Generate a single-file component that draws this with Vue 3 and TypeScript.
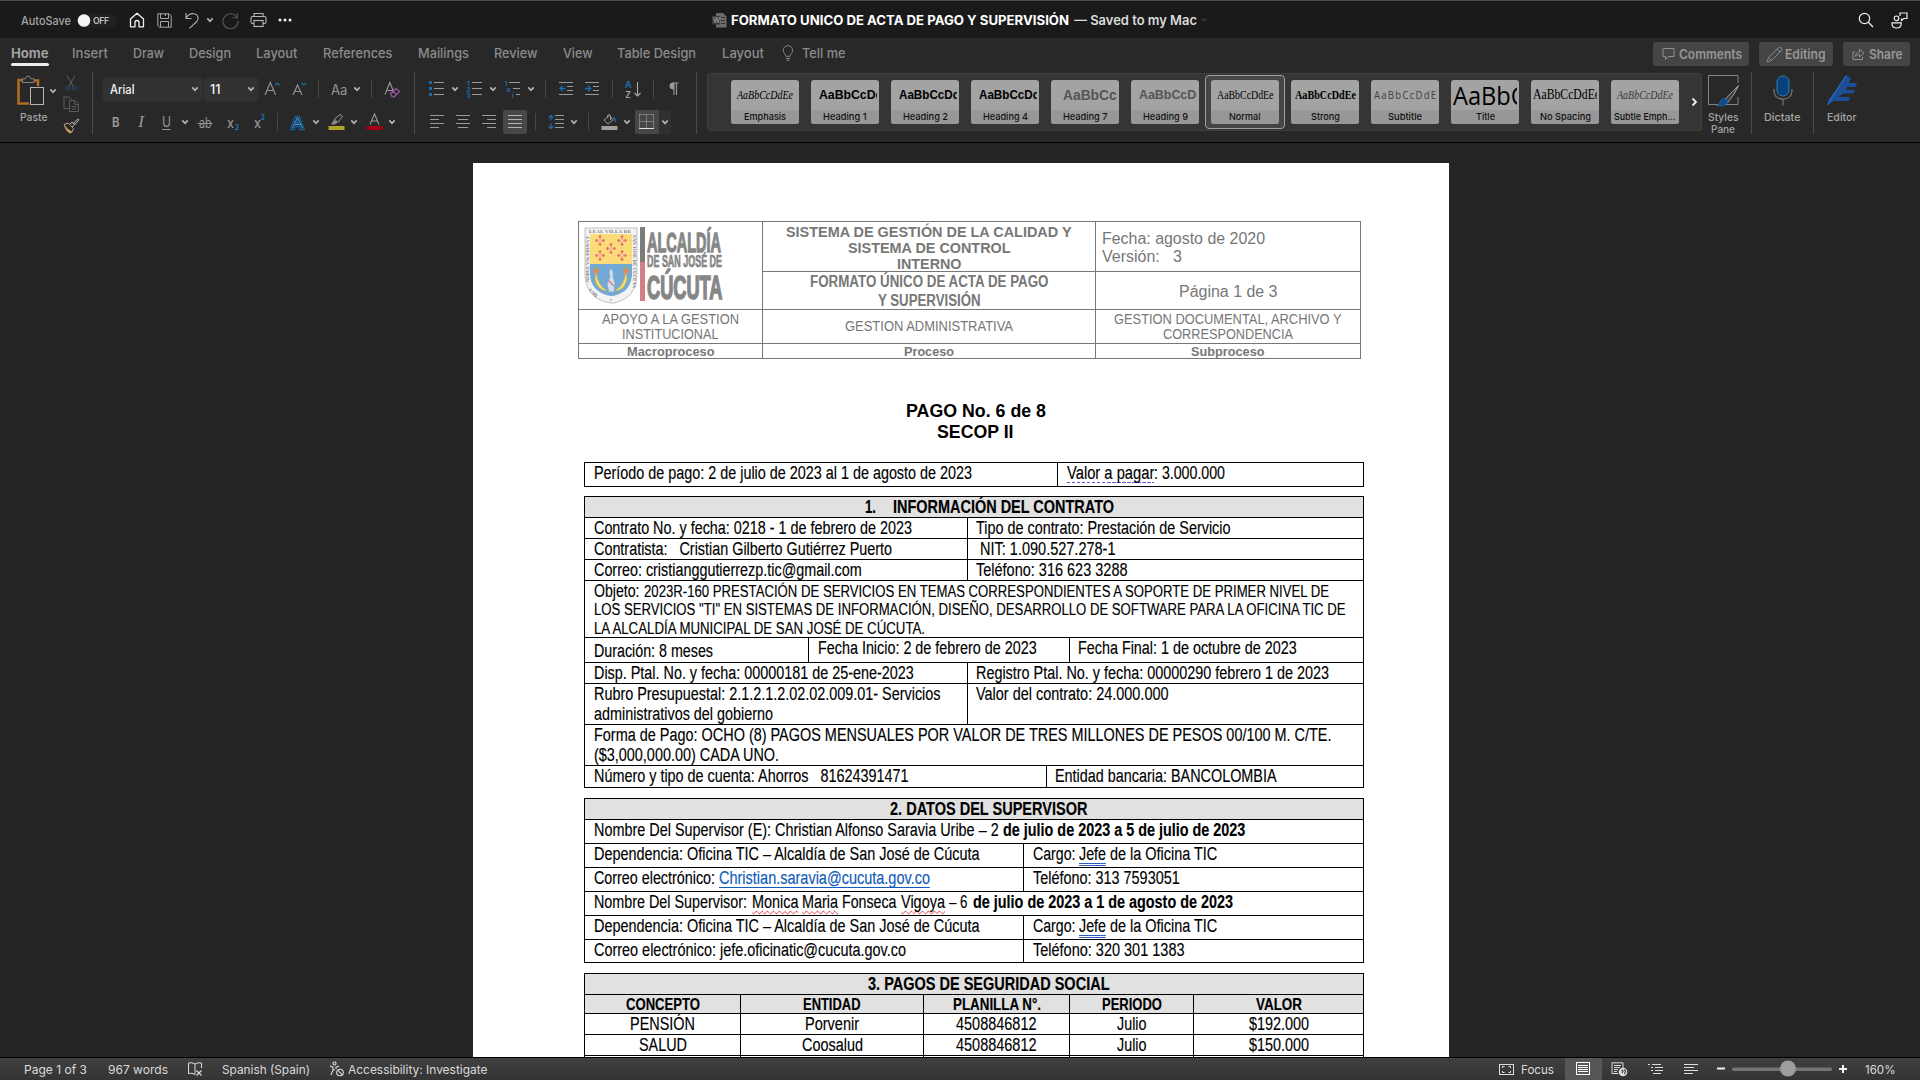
<script setup lang="ts">
import { h, withDirectives, type Directive, type FunctionalComponent } from 'vue'

/** Condenses or expands a run of text horizontally to the given advance width. */
const vFit: Directive<HTMLElement, number> = {
  mounted(el, binding) {
    const natural = el.offsetWidth
    if (!natural || !binding.value) return
    const exact = el.getBoundingClientRect().width
    el.style.transform = `scaleX(${binding.value / exact})`
    el.style.marginRight = `${binding.value - exact}px`
  },
}

interface Icon { w: number; h: number; body: string }
const g = '#9a9a9a'
const bl = '#1f6aa8'
const lines = (rows: number[][], c = g, sw = 1) =>
  rows.map(([x1, y, x2]) => `<path d="M${x1} ${y}H${x2}" stroke="${c}" stroke-width="${sw}"/>`).join('')
const txt = (x: number, y: number, s: number, t: string, c: string, extra = '') =>
  `<text x="${x}" y="${y}" font-size="${s}" fill="${c}" font-family="Inter, sans-serif" ${extra}>${t}</text>`

const ICONS: Record<string, Icon> = {
  chev: { w: 8, h: 6, body: '<path d="M1.3 1.4L4 4.3 6.7 1.4" fill="none" stroke="#b4b4b4" stroke-width="1.7"/>' },
  home: { w: 16, h: 16, body: '<path d="M1.5 7L8 1.2 14.500 7V14.800H10V9.500Q8 7.500 6 9.500V14.800H1.500Z" fill="none" stroke="#f2f2f2" stroke-width="1.3" stroke-linejoin="round"/>' },
  save: { w: 15, h: 15, body: '<g fill="none" stroke="#a9a9a9"><path d="M.8.800H12.200L14.200 2.800V14.200H2.500L.8 12.500Z"/><path d="M3.500.800V5.500H11.500V.800M3.500 14V8.500H11.500V14M8.500 1V3"/></g>' },
  undo: { w: 16, h: 17, body: '<path d="M2 1V6.500H7.500M2 6.200C4 2.500 7 1.300 10 1.700 14 2.300 15.500 6.500 12.800 9.500L5.500 16.300" fill="none" stroke="#b0b0b0" stroke-width="1.1"/>' },
  redo: { w: 17, h: 17, body: '<path d="M15.300 1V5.800H10.500M15 5.500A7.500 7.500 0 1 0 16 9" fill="none" stroke="#5a5a5a" stroke-width="1.100"/>' },
  print: { w: 17, h: 16, body: '<g fill="none" stroke="#b4b4b4" stroke-width="1.1"><path d="M4 4.500V1.500H13V4.500M4 11.500H2.500Q1 11.500 1 10V6Q1 4.500 2.500 4.500H14.500Q16 4.500 16 6V10Q16 11.500 14.500 11.500H13"/><rect x="4" y="8.500" width="9" height="6"/></g>' },
  dots: { w: 14, h: 4, body: '<g fill="#f0f0f0"><circle cx="2" cy="2" r="1.500"/><circle cx="7" cy="2" r="1.500"/><circle cx="12" cy="2" r="1.500"/></g>' },
  word: { w: 15, h: 15, body: '<path d="M4 0H11L14.500 3.500V14.500H4Z" fill="#6b6b6b"/><path d="M9 4.500H13M9 7.500H13M9 10.500H13" stroke="#333"/><rect x="0" y="3" width="8" height="8.500" fill="#3d3d3d"/>' + txt(1, 10, 7, 'W', '#999', 'font-weight="600"') },
  faint: { w: 8, h: 6, body: '<path d="M1.500 1.500L4 4 6.500 1.500" fill="none" stroke="#3c3c3c" stroke-width="1.200"/>' },
  search: { w: 16, h: 16, body: '<circle cx="6.500" cy="6.500" r="5.200" fill="none" stroke="#eee" stroke-width="1.200"/><path d="M10.300 10.300L15 15" stroke="#eee" stroke-width="1.300"/>' },
  people: { w: 17, h: 17, body: '<g fill="none" stroke="#eee" stroke-width="1.200"><circle cx="5.500" cy="6.300" r="2.300"/><path d="M1 10.800H10.200V12Q10 16 5.600 16 1.200 16 1 12Z"/><path d="M9 4V1H16V6.500H12.700L10.500 8.500V6.500"/></g>' },
  bulb: { w: 12, h: 16, body: '<g fill="none" stroke="#848484"><path d="M3.800 11.300C3.800 9 1.200 8.300 1.200 5.300A4.700 4.700 0 0 1 10.600 5.300C10.600 8.300 8 9 8 11.300ZM4 13.500H8M4.600 15.300H7.300"/></g>' },
  paste: { w: 28, h: 32, body: '<path d="M6.500 5H1.500V28.500H12M15 5.500H21V11" fill="none" stroke="#b06d22" stroke-width="2.600"/><path d="M5.500 7.500V3.800H8.500Q9 1 11.200 1T14 3.800H17V7.500Z" fill="#2b2b2b" stroke="#858585"/><rect x="13.500" y="12.500" width="13" height="17" fill="#282828" stroke="#b5b5b5"/>' },
  cut: { w: 12, h: 16, body: '<path d="M2 .500L8.500 12M10 .500L3.500 12" stroke="#5d5d5d"/><g fill="none" stroke="#23496b" stroke-width="1.100"><circle cx="2.800" cy="13" r="1.900"/><circle cx="9.200" cy="13" r="1.900"/></g>' },
  copy: { w: 17, h: 17, body: '<g fill="#282828" stroke="#5a5a5a"><path d="M6.500 12.500H1V1H6L8.500 3.500V5"/><path d="M6.500 4.500H12L15.500 8V15.500H6.500ZM11.500 4.500V8.500H15.500M8.500 10.500H13.500M8.500 13H13.500"/></g>' },
  brush: { w: 17, h: 16, body: '<path d="M1 7.500L9 14.500 7 15.500Q2.500 13 1 7.500Z" fill="#d9a24a"/><path d="M1 6.500L5 5 10.500 10.500 9 14Q3.500 12 1 6.500Z" fill="#2a2a2a" stroke="#b5a58a" /><path d="M6.500 6.500L9 4 11.500 6.500 9.500 9M10.500 5L15 .800 16 1.800 12 6.500Z" fill="#333" stroke="#b5b5b5"/>' },
  grow: { w: 17, h: 16, body: '<path d="M1 14L6.300 1.500 11.600 14M3 9.500H9.700" stroke="#929292" fill="none" stroke-width="1.200"/><path d="M11 4.200L13.300 2 15.600 4.200" stroke="#1f6f9f" fill="none" stroke-width="1.200"/>' },
  shrink: { w: 15, h: 16, body: '<path d="M1 14L5.500 4 10 14M2.700 10.500H8.500" stroke="#929292" fill="none" stroke-width="1.200"/><path d="M9.500 2L11.700 4.200 14 2" stroke="#1f6f9f" fill="none" stroke-width="1.200"/>' },
  clear: { w: 17, h: 17, body: '<path d="M1 13.500L5.800 1.500 9.300 10M3 9.500H8.500" stroke="#999" fill="none" stroke-width="1.100"/><path d="M6.500 12.500L12 7.500 15.500 10.500 10 16 8 15.500ZM9 10.200L12.500 13.800" stroke="#9a58a8" fill="none" stroke-width="1.200"/>' },
  glow: { w: 16, h: 17, body: '<text x="1" y="14.500" font-size="17" font-weight="700" font-family="Liberation Sans, sans-serif" fill="#1d3a55" stroke="#0f5f9e" stroke-width="2.400" paint-order="stroke" textLength="13" lengthAdjust="spacingAndGlyphs">A</text><path d="M2.500 14L7.500 3.500 12.500 14M4.500 10.500H10.500" fill="none" stroke="#6aa5d2" stroke-width=".8"/>' },
  marker: { w: 17, h: 18, body: '<rect x=".500" y="13" width="16" height="4" fill="#a8a826"/><path d="M6.500 6L12 1.500 14.500 3.500 10 9.500Z" fill="none" stroke="#999"/><path d="M6 6.500L9.500 9.500 7 11.500H3Z" fill="#8a8a8a"/>' },
  fcolor: { w: 17, h: 18, body: '<rect x=".500" y="13" width="16" height="4" fill="#a80010"/><path d="M4 11.500L8.500 1 13 11.500M5.500 8H11.500" stroke="#999" fill="none" stroke-width="1.100"/>' },
  bullets: { w: 17, h: 16, body: `<g fill="${bl}"><rect x="1" y="0" width="3" height="3"/><rect x="1" y="6" width="3" height="3"/><rect x="1" y="12" width="3" height="3"/></g>` + lines([[6, 1.5, 16], [6, 7.5, 16], [6, 13.5, 16]]) },
  numbers: { w: 17, h: 18, body: txt(1, 6, 6.5, '1', bl, 'font-weight="700"') + txt(.5, 12, 6.5, '2', bl, 'font-weight="700"') + txt(.5, 18, 6.5, '3', bl, 'font-weight="700"') + lines([[6, 2.5, 16], [6, 8.500, 16], [6, 14.500, 16]]) },
  multi: { w: 17, h: 18, body: txt(.5, 6, 6.5, '1', bl, 'font-weight="700"') + txt(2.5, 12, 7, 'a', bl, 'font-weight="700"') + txt(8, 18, 7, 'i', bl, 'font-weight="700"') + lines([[5, 2.5, 16], [9, 8.500, 16], [12, 14.500, 16]]) },
  outdent: { w: 15, h: 14, body: lines([[0, .5, 14], [8, 4.500, 14], [8, 8.500, 14], [0, 12.500, 14]]) + `<path d="M6.500 6.500H1M3.500 4L1 6.500 3.500 9" fill="none" stroke="${bl}" stroke-width="1.300"/>` },
  indent: { w: 15, h: 14, body: lines([[0, .5, 14], [8, 4.500, 14], [8, 8.500, 14], [0, 12.500, 14]]) + `<path d="M0 6.500H5.500M3.200 4L5.700 6.500 3.200 9" fill="none" stroke="${bl}" stroke-width="1.300"/>` },
  sort: { w: 17, h: 17, body: txt(0, 7, 9, 'A', bl, 'font-weight="700"') + txt(.2, 16.5, 9, 'Z', '#aaa', 'font-weight="500"') + '<path d="M12.500 1V15M9.500 12L12.500 15 15.500 12" fill="none" stroke="#aaa" stroke-width="1.100"/>' },
  pil: { w: 11, h: 14, body: '<path d="M6 7H4.500A3.200 3.200 0 0 1 4.500 1H10.500M6 1V13M8.500 1V13" fill="none" stroke="#999" stroke-width="1.100"/><path d="M6 1H4.500A3 3 0 0 0 4.500 7H6Z" fill="#999"/>' },
  left: { w: 15, h: 14, body: lines([[0, .5, 14], [0, 4.500, 9], [0, 8.500, 14], [0, 12.500, 9]]) },
  center: { w: 15, h: 14, body: lines([[0, .5, 14], [2, 4.500, 12], [0, 8.500, 14], [2, 12.500, 12]]) },
  right: { w: 15, h: 14, body: lines([[0, .5, 14], [5, 4.500, 14], [0, 8.500, 14], [5, 12.500, 14]]) },
  justify: { w: 24, h: 24, body: '<rect width="24" height="24" rx="2" fill="#474747"/>' + lines([[5, 5.5, 19], [5, 9.500, 19], [5, 13.500, 19], [5, 17.500, 19]], '#b5b5b5') },
  spacing: { w: 17, h: 16, body: `<path d="M3 1.500V6.500M.700 3.700L3 1.400 5.300 3.700M3 9.500V14.500M.700 12.300L3 14.600 5.300 12.300" stroke="${bl}" fill="none" stroke-width="1.300"/>` + lines([[7, 1.5, 16], [7, 5.500, 16], [7, 9.500, 16], [7, 13.500, 16]]) },
  shade: { w: 17, h: 18, body: '<rect x=".500" y="13" width="16" height="4" fill="#a0a0a0"/><path d="M3 7L8.500 2.500 12 7 7 11ZM6.500 5V2.500Q8 .500 9.500 2.500V7" fill="none" stroke="#999"/><path d="M12.500 3.500Q15.500 5 14.500 10 13 8.500 12 4Z" fill="#1f6aa8"/>' },
  borders: { w: 36, h: 24, body: '<rect width="36" height="24" rx="2" fill="#303030"/><path d="M2 0H24V24H2Q0 24 0 22V2Q0 0 2 0Z" fill="#474747"/><path d="M4.500 4.500H19M4.500 4.500V18M18.500 4.500V18M11.500 4.500V18M4.500 11.500H19" stroke="#aaa" stroke-dasharray="1 1"/><path d="M4 18.500H19" stroke="#e0e0e0"/><path d="M27.300 10.500L30 13.400 32.700 10.500" fill="none" stroke="#b4b4b4" stroke-width="1.700"/>' },
  comment: { w: 13, h: 14, body: '<path d="M1 1.500H12V9.500H6L3.500 12.500V9.500H1Z" fill="none" stroke="#8e8e8e"/>' },
  pencil: { w: 17, h: 17, body: '<path d="M1 16L2.500 11.500 12 2Q14 .500 15.200 1.700T15 5L5.500 14.500ZM11 3L14 6M2.500 11.500L5.500 14.500" fill="none" stroke="#7d8894"/>' },
  share: { w: 13, h: 14, body: '<path d="M3 5H1V12.500H10.500V10M3.500 9.500Q3.500 5 7.500 5V2.500L12 6.200 7.500 10V7.500Q5 7.500 3.500 9.500Z" fill="none" stroke="#8e8e8e"/>' },
  proof: { w: 17, h: 16, body: '<path d="M8 3Q5 1 1.500 2V12.500Q5 11.500 8 13.500M8 3Q11 1 14.500 2V7M8 3V13.500" fill="none" stroke="#ddd"/><path d="M9.500 9.500L14.500 14.500M14.500 9.500L9.500 14.500" stroke="#ddd" stroke-width="1.200"/>' },
  access: { w: 16, h: 16, body: '<g fill="none" stroke="#ddd" stroke-width="1.100"><circle cx="5.500" cy="2.500" r="1.500"/><path d="M1 5L4 6.200V9L2 14M10 5L7 6.200V8M4 9H6"/><circle cx="11" cy="11.500" r="3.300"/><path d="M8.800 9.300L13.300 13.800"/></g>' },
  focus: { w: 16, h: 13, body: '<rect x=".500" y="1.500" width="14" height="10" fill="none" stroke="#ddd"/><path d="M3.500 5V3.500H5.500M9.500 3.500H11.500V5M11.500 8V9.500H9.500M5.500 9.500H3.500V8" fill="none" stroke="#ddd"/>' },
  printview: { w: 37, h: 22, body: '<rect width="37" height="22" fill="#565656"/><rect x="11.500" y="4.500" width="13" height="12" fill="none" stroke="#fff"/>' + lines([[13, 7.5, 23], [13, 9.5, 23], [13, 11.5, 23], [13, 13.5, 23]], '#fff') },
  web: { w: 17, h: 15, body: '<path d="M7 11.500H1V.800H12V6M3 3.500H10M3 5.500H9M3 7.500H7M3 9.500H6" fill="none" stroke="#ddd"/><circle cx="12" cy="10" r="4.300" fill="#ddd"/><path d="M10.500 8L12 9 11 11M13 7.500L14.500 9 13.500 12" stroke="#444" fill="none" stroke-width="1.200"/>' },
  outline: { w: 16, h: 12, body: lines([[0, 1.500, 2], [4, 1.500, 13], [3, 4.500, 5], [7, 4.500, 15], [3, 7.500, 5], [7, 7.500, 15], [5, 10.500, 13]], '#ddd') },
  draft: { w: 15, h: 12, body: lines([[0, 1.500, 14], [0, 4.500, 10], [0, 7.500, 14], [0, 10.500, 9]], '#ddd') },
  minus: { w: 8, h: 8, body: '<path d="M0 3.500H8" stroke="#f2f2f2" stroke-width="2"/>' },
  plus: { w: 8, h: 8, body: '<path d="M0 4H8M4 0V8" stroke="#f2f2f2" stroke-width="2"/>' },
  slider: { w: 100, h: 18, body: '<rect y="7.500" width="100" height="3.500" rx="1.700" fill="#757575"/><circle cx="56" cy="8.500" r="8" fill="#9d9d9d"/>' },
  toggle: { w: 40, h: 15, body: '<rect x="0" y=".500" width="40" height="14" rx="7" fill="#202020"/><circle cx="7" cy="7.500" r="6.300" fill="#f4f4f4"/>' + txt(16, 10.800, 8.600, 'OFF', '#c0c0c0', 'font-weight="600" textLength="16"') },
  pane: { w: 31, h: 32, body: '<path d="M30 8V.500H.500V29.500H30V22" fill="none" stroke="#858585"/><path d="M30.500 10.500L17 24.500 20 27Q27 19 30.500 10.500Z" fill="#3a3a3a" stroke="#a8a8a8"/><path d="M17 23.500Q20.500 24 20 28 16 32 8.500 30.500 12 29 12.500 26 14 23 17 23.500Z" fill="#0d4c86" stroke="#3377ab" stroke-width=".6"/>' },
  mic: { w: 20, h: 32, body: '<rect x="4" y="1" width="12" height="20" rx="6" fill="#08427a" stroke="#2e7fc0"/><path d="M1 14V16Q1.500 24 10 24T19 16V14M10 24V30.500" fill="none" stroke="#777" stroke-width="1.200"/>' },
  editor: { w: 32, h: 32, body: '<path d="M20 0L25 3 19 17 5 28 1 30.500 2.500 25Z" fill="#1b4e94"/><path d="M20 1L5 24 2 30" fill="none" stroke="#2e6fc0"/><path d="M16 8H31L29.500 12H15ZM13 15H29L27.500 18.500H12ZM9 22H24L22.500 26H7Z" fill="#1b4e94"/>' },
}

type Item = { t: 'i' | 's' | 'x' | 'box'; v: string; x: number; w?: number; c?: string; children?: Item[] }
const I = (v: string, x: number): Item => ({ t: 'i', v, x })
const T = (v: string, x: number, w: number, c = ''): Item => ({ t: 'x', v, x, w, c })
const S = (x: number): Item => ({ t: 's', v: '', x, w: 1 })
const B = (x: number, w: number, c: string, children: Item[]): Item => ({ t: 'box', v: '', x, w, c, children })

/** A horizontal bar: items follow one another, separated by the gap between their edges. */
const Strip: FunctionalComponent<{ items: Item[]; from?: number }> = (props) => {
  let edge = props.from ?? 0
  return h('div', { class: 'strip' }, props.items.map((it) => {
    const w = it.w ?? ICONS[it.v].w
    const style = { marginLeft: `${it.x - edge}px` }
    const start = it.x
    edge = it.x + w
    if (it.t === 'i') {
      const ic = ICONS[it.v]
      return h('svg', { class: 'ico', style, width: ic.w, height: ic.h, viewBox: `0 0 ${ic.w} ${ic.h}`, innerHTML: ic.body })
    }
    if (it.t === 's') return h('i', { class: 'sep', style })
    if (it.t === 'box') {
      return h('div', { class: ['box', it.c], style: { ...style, width: `${w}px` } }, [
        h(Strip, { items: it.children ?? [], from: start }),
      ])
    }
    return h('div', { class: ['lab', it.c], style: { ...style, width: `${w}px` } }, [
      withDirectives(h('span', { class: 'fit' }, it.v), [[vFit, w]]),
    ])
  }))
}
Strip.props = ['items', 'from']

const titleBar: Item[] = [
  T('AutoSave', 21, 50, 'auto'), I('toggle', 77), I('home', 129), I('save', 157), I('undo', 184), I('chev', 206),
  I('redo', 222), I('print', 250), I('dots', 278), I('word', 712),
  T('FORMATO UNICO DE ACTA DE PAGO Y SUPERVISIÓN', 731, 338, 'doc'), T('— Saved to my Mac', 1073.5, 123, 'saved'), I('faint', 1200),
  I('search', 1858), I('people', 1891),
]
const tabs: Item[] = [
  T('Home', 11, 37.5, 'tab active'), T('Insert', 72, 36, 'tab'), T('Draw', 133, 31, 'tab'), T('Design', 189, 42, 'tab'),
  T('Layout', 256, 41.500, 'tab'), T('References', 323, 69.500, 'tab'), T('Mailings', 418, 51, 'tab'), T('Review', 494, 43.500, 'tab'),
  T('View', 562.500, 29.500, 'tab'), T('Table Design', 617, 79, 'tab'), T('Layout', 722, 42, 'tab'), I('bulb', 782), T('Tell me', 802, 43.500, 'tab'),
  B(1653, 96, 'btn', [I('comment', 1662), T('Comments', 1679, 63)]),
  B(1759, 74, 'btn', [I('pencil', 1766), T('Editing', 1785, 40.500)]),
  B(1843, 67, 'btn', [I('share', 1852), T('Share', 1869, 33.500)]),
]
const fontTop: Item[] = [
  B(103, 99, 'field', [T('Arial', 109.500, 24.500), I('chev', 190.500)]),
  B(204, 54, 'field', [T('11', 210, 10.500), I('chev', 246.500)]),
  I('grow', 264), I('shrink', 292), S(318), T('Aa', 331, 16.500, 'aa'), I('chev', 353), S(371), I('clear', 384),
]
const fontBottom: Item[] = [
  T('B', 111.500, 7.500, 'fmt b'), T('I', 138, 6, 'fmt i'), T('U', 162, 9, 'fmt u'), I('chev', 181), T('ab', 199, 12.500, 'fmt st'),
  T('x', 227, 7, 'fmt x'), T('2', 234.500, 4, 'sub'), T('x', 253.500, 7, 'fmt x'), T('2', 260.500, 4, 'sup'), S(277),
  I('glow', 290), I('chev', 312), I('marker', 327.500), I('chev', 350), I('fcolor', 365.500), I('chev', 388),
]
const paraTop: Item[] = [
  I('bullets', 428), I('chev', 451), I('numbers', 466), I('chev', 489), I('multi', 504), I('chev', 527), S(545),
  I('outdent', 559), I('indent', 585), S(612), I('sort', 625), S(653), I('pil', 668),
]
const paraBottom: Item[] = [
  I('left', 430), I('center', 456), I('right', 482), I('justify', 503), S(535), I('spacing', 548), I('chev', 570), S(588),
  I('shade', 600.500), I('chev', 623), I('borders', 635),
]
const statusBar: Item[] = [
  T('Page 1 of 3', 24, 63), T('967 words', 108, 60), I('proof', 187), T('Spanish (Spain)', 221.500, 88), I('access', 329),
  T('Accessibility: Investigate', 348, 139.500), I('focus', 1499), T('Focus', 1521, 33), I('printview', 1565), I('web', 1611),
  I('outline', 1648), I('draft', 1684), I('minus', 1717), I('slider', 1732), I('plus', 1839), T('160%', 1864.500, 30.500),
]

interface Card { name: string; nw: number; cls: string; pad: number; w: number }
const cards: Card[] = [
  { name: 'Emphasis', nw: 42, cls: 'serif it', pad: 6, w: 56 },
  { name: 'Heading 1', nw: 43.5, cls: 'hd', pad: 8, w: 79 },
  { name: 'Heading 2', nw: 45, cls: 'hd', pad: 8, w: 75 },
  { name: 'Heading 4', nw: 45, cls: 'hd', pad: 8, w: 75 },
  { name: 'Heading 7', nw: 44.5, cls: 'hd h7', pad: 12, w: 89 },
  { name: 'Heading 9', nw: 45, cls: 'hd h9', pad: 8, w: 80 },
  { name: 'Normal', nw: 31.5, cls: 'serif', pad: 6, w: 56.5 },
  { name: 'Strong', nw: 29, cls: 'serif bold', pad: 4, w: 61 },
  { name: 'Subtitle', nw: 34, cls: 'sbt', pad: 3, w: 70 },
  { name: 'Title', nw: 19, cls: 'ttl', pad: 2, w: 142 },
  { name: 'No Spacing', nw: 51, cls: 'serif big', pad: 2, w: 67 },
  { name: 'Subtle Emph...', nw: 61.5, cls: 'serif it gry', pad: 6, w: 56 },
]

/* Document tables: run = [text, width, style, gap before] */
type Run = [string, number, string?, number?]
interface Cell { w?: number; pad?: number; top?: number; lh?: number; c?: string; lines: Run[][] }
interface Row { h: number; head?: boolean; cells: Cell[] }
const one = (text: string, width: number, o: Partial<Cell> = {}): Cell => ({ lines: [[[text, width]]], ...o })
const L = 382

const tables: { gap: number; rows: Row[] }[] = [
  { gap: 0, rows: [{ h: 24, cells: [
    one('Período de pago: 2 de julio de 2023 al 1 de agosto de 2023', 378, { w: 472 }),
    { pad: 8.500, lines: [[['Valor a pagar', 87.3, 'dotted'], [': 3.000.000', 71]]] },
  ] }] },
  { gap: 9, rows: [
    { h: 21, head: true, cells: [{ c: 'mid', lines: [[['1.', 11, '', 30], ['INFORMACIÓN DEL CONTRATO', 221, '', 17]]] }] },
    { h: 21, cells: [one('Contrato No. y fecha: 0218 - 1 de febrero de 2023', 318, { w: L }), one('Tipo de contrato: Prestación de Servicio', 254.500, { pad: 7.700 })] },
    { h: 21, cells: [one('Contratista:   Cristian Gilberto Gutiérrez Puerto', 298, { w: L }), one('NIT: 1.090.527.278-1', 135.500, { pad: 11.700 })] },
    { h: 21, cells: [one('Correo: cristianggutierrezp.tic@gmail.com', 267.700, { w: L }), one('Teléfono: 316 623 3288', 151.500, { pad: 7.700 })] },
    { h: 57, cells: [{ lh: 19, lines: [
      [['Objeto:', 45.500], ['2023R-160 PRESTACIÓN DE SERVICIOS EN TEMAS CORRESPONDIENTES A SOPORTE DE PRIMER NIVEL DE', 685, 'small', 4.500]],
      [['LOS SERVICIOS "TI" EN SISTEMAS DE INFORMACIÓN, DISEÑO, DESARROLLO DE SOFTWARE PARA LA OFICINA TIC DE', 751.500, 'small']],
      [['LA ALCALDÍA MUNICIPAL DE SAN JOSÉ DE CÚCUTA.', 331, 'small']],
    ] }] },
    { h: 25, cells: [one('Duración: 8 meses', 119, { w: 223, top: 3 }), one('Fecha Inicio: 2 de febrero de 2023', 218.700, { w: 261, pad: 8.700 }), one('Fecha Final: 1 de octubre de 2023', 218.700, { pad: 7.700 })] },
    { h: 21, cells: [one('Disp. Ptal. No. y fecha: 00000181 de 25-ene-2023', 319.700, { w: L }), one('Registro Ptal. No. y fecha: 00000290 febrero 1 de 2023', 353, { pad: 7.700 })] },
    { h: 41, cells: [{ w: L, lh: 20, lines: [[['Rubro Presupuestal: 2.1.2.1.2.02.02.009.01- Servicios', 346.500]], [['administrativos del gobierno', 179]]] }, one('Valor del contrato: 24.000.000', 192.500, { pad: 7.700 })] },
    { h: 41, cells: [{ lh: 20, lines: [[['Forma de Pago: OCHO (8) PAGOS MENSUALES POR VALOR DE TRES MILLONES DE PESOS 00/100 M. C/TE.', 737.500]], [['($3,000,000.00) CADA UNO.', 185]]] }] },
    { h: 22, cells: [one('Número y tipo de cuenta: Ahorros   81624391471', 314.500, { w: 461 }), one('Entidad bancaria: BANCOLOMBIA', 221.500, { pad: 7.700 })] },
  ] },
  { gap: 10, rows: [
    { h: 21, head: true, cells: [one('2. DATOS DEL SUPERVISOR', 197.500, { c: 'mid', pad: 29 })] },
    { h: 24, cells: [{ lines: [[['Nombre Del Supervisor (E): Christian Alfonso Saravia Uribe – 2', 404.700], ['de julio de 2023 a 5 de julio de 2023', 242.300, 'bold', 4]]] }] },
    { h: 24, cells: [one('Dependencia: Oficina TIC – Alcaldía de San José de Cúcuta', 385.500, { w: 438 }), { pad: 8.700, lines: [[['Cargo:', 42.500], ['Jefe', 27, 'dbl', 4], ['de la Oficina TIC', 107.300, '', 4]]] }] },
    { h: 24, cells: [{ w: 438, lines: [[['Correo electrónico:', 121], ['Christian.saravia@cucuta.gov.co', 211, 'link', 4.200]]] }, one('Teléfono: 313 7593051', 146.700, { pad: 8.700 })] },
    { h: 24, cells: [{ lines: [[['Nombre Del Supervisor:', 153], ['Monica', 46.500, 'wavy', 4.500], ['Maria', 36, 'wavy', 4], ['Fonseca', 54.500, '', 4], ['Vigoya', 44, 'wavy', 4], ['– 6', 18.500, '', 4.500], ['de julio de 2023 a 1 de agosto de 2023', 260, 'bold', 4.800]]] }] },
    { h: 24, cells: [one('Dependencia: Oficina TIC – Alcaldía de San José de Cúcuta', 385.500, { w: 438 }), { pad: 8.700, lines: [[['Cargo:', 42.500], ['Jefe', 27, 'dbl', 4], ['de la Oficina TIC', 107.300, '', 4]]] }] },
    { h: 23, cells: [one('Correo electrónico: jefe.oficinatic@cucuta.gov.co', 312, { w: 438 }), one('Teléfono: 320 301 1383', 151.500, { pad: 8.700 })] },
  ] },
  { gap: 10, rows: [
    { h: 21, head: true, cells: [one('3. PAGOS DE SEGURIDAD SOCIAL', 241.500, { c: 'mid', pad: 29 })] },
    { h: 19, head: true, cells: [
      one('CONCEPTO', 74, { c: 'mid sm', w: 155 }), one('ENTIDAD', 57.500, { c: 'mid sm', w: 183 }), one('PLANILLA N°.', 88, { c: 'mid sm', w: 146 }),
      one('PERIODO', 60, { c: 'mid sm', w: 124 }), one('VALOR', 46, { c: 'mid sm' }),
    ] },
    ...[['PENSIÓN', 65, 'Porvenir', 54, '$192.000'], ['SALUD', 48, 'Coosalud', 61, '$150.000'], ['ARL', 30, 'Positiva', 54, '$6.300']].map((r) => ({ h: 21, cells: [
      one(r[0] as string, r[1] as number, { c: 'mid', w: 155 }), one(r[2] as string, r[3] as number, { c: 'mid', w: 183 }),
      one('4508846812', 80.500, { c: 'mid', w: 146 }), one('Julio', 29.500, { c: 'mid', w: 124 }), one(r[4] as string, 60, { c: 'mid' }),
    ] })),
  ] },
]

const crosses = [[16, 15], [38, 15], [27, 23], [16, 30], [38, 30]]
</script>

<template>
  <div class="app">
    <header class="title"><Strip :items="titleBar" /></header>
    <nav class="tabs"><Strip :items="tabs" /></nav>

    <section class="ribbon">
      <div class="clip">
        <div class="paste">
          <div class="paste-top">
            <svg width="28" height="32" viewBox="0 0 28 32" v-html="ICONS.paste.body" />
            <svg width="8" height="6" viewBox="0 0 8 6" v-html="ICONS.chev.body" />
          </div>
          <span class="big-label"><span v-fit="27.5" class="fit">Paste</span></span>
        </div>
        <div class="edit">
          <svg width="12" height="16" v-html="ICONS.cut.body" />
          <svg width="17" height="17" v-html="ICONS.copy.body" />
          <svg width="17" height="16" v-html="ICONS.brush.body" />
        </div>
      </div>
      <div class="group font"><Strip :items="fontTop" :from="93" /><Strip :items="fontBottom" :from="93" /></div>
      <div class="group para"><Strip :items="paraTop" :from="415" /><Strip :items="paraBottom" :from="415" /></div>
      <div class="group styles">
        <div class="gallery">
          <div v-for="c in cards" :key="c.name" class="slot" :class="{ sel: c.name === 'Normal' }">
            <div class="card">
              <div class="sample" :class="c.cls" :style="{ paddingLeft: c.pad + 'px' }"><span v-fit="c.w" class="fit">AaBbCcDdEe</span></div>
              <div class="cname"><span v-fit="c.nw" class="fit">{{ c.name }}</span></div>
            </div>
          </div>
          <svg class="more" width="7" height="10"><path d="M1.500 1.500L5 5 1.500 8.500" fill="none" stroke="#eee" stroke-width="1.800" /></svg>
        </div>
        <div class="tool pane">
          <svg width="31" height="32" v-html="ICONS.pane.body" />
          <span class="big-label"><span v-fit="30.5" class="fit">Styles</span></span>
          <span class="big-label"><span v-fit="24" class="fit">Pane</span></span>
        </div>
      </div>
      <div class="tool dictate">
        <svg width="20" height="32" v-html="ICONS.mic.body" />
        <span class="big-label"><span v-fit="36.5" class="fit">Dictate</span></span>
      </div>
      <div class="tool editor">
        <svg width="32" height="32" v-html="ICONS.editor.body" />
        <span class="big-label"><span v-fit="29.5" class="fit">Editor</span></span>
      </div>
    </section>

    <main class="canvas">
      <article class="page">
        <div class="letterhead">
          <div class="lh-logo">
            <svg width="150" height="86" viewBox="0 0 150 86">
              <path d="M6 6H58V52Q57 70 47 76T32 81Q25 81 16 75 6 66 6 52Z" fill="#f3f3f3" stroke="#aaa" stroke-width=".7" />
              <g transform="translate(1 0)">
                <path d="M10 12H52V42H10Z" fill="#fbdc78" />
                <path d="M10 42H52V54Q50 66 43 70T31 74Q23 73 17 68 10 62 10 52Z" fill="#73a9d6" />
                <g v-for="(p, i) in crosses" :key="i" :transform="`translate(${p[0]} ${p[1] - 2})`">
                  <path d="M4 0V11M-1 5.500H9" stroke="#e98a82" stroke-width="1.600" />
                  <path d="M2.500 1.500H5.500M2.500 9.500H5.500M.5 4V7M7.500 4V7" stroke="#e4625f" stroke-width="1" />
                  <rect x="3" y="4.500" width="2" height="2" fill="#f7e3a0" />
                </g>
                <path d="M16 48Q17 63 27 69 17 68 15 57ZM46 48Q45 63 35 69 45 68 47 57Z" fill="#f6dc69" stroke="#cfae4c" stroke-width=".6" />
                <circle cx="16" cy="49" r="2.800" fill="#e58a63" /><circle cx="46" cy="49" r="2.800" fill="#e58a63" />
                <circle cx="17" cy="46" r="1.800" fill="#7aba68" /><circle cx="45" cy="46" r="1.800" fill="#7aba68" />
                <path d="M31 46Q28 50 30 55L27 62 29 70H34L35 61 33 54Q34 49 31 46Z" fill="#cfe0ee" stroke="#8aa4be" stroke-width=".7" />
                <path d="M28 58L34 64" stroke="#d98080" stroke-width="1.500" />
              </g>
              <g font-family="Liberation Serif, serif" font-weight="700" fill="#777">
                <text x="10" y="10.800" font-size="5" textLength="42">LEAL VILLA DE</text>
                <text transform="translate(54.300 13) rotate(90)" font-size="4.800" textLength="53">SAN JOSE DE CUCUTA</text>
                <text transform="translate(10 60) rotate(-90)" font-size="4.600" textLength="46">NOBLE VALEROSA Y</text>
                <text transform="translate(19 73.500) rotate(-135)" font-size="4.600">MUY</text>
              </g>
              <circle cx="32" cy="78" r="1" fill="none" stroke="#999" stroke-width=".5" />
              <path d="M63.500 5V40" stroke="#7c7c7c" stroke-width="5" /><path d="M63.500 40V79" stroke="#d18089" stroke-width="5" />
              <g font-family="Liberation Sans, sans-serif" font-weight="700" fill="#868686" stroke="#868686">
                <text x="68" y="29.500" font-size="28" stroke-width="1.300" textLength="74" lengthAdjust="spacingAndGlyphs">ALCALDÍA</text>
                <text x="68" y="45" font-size="16" stroke-width=".7" textLength="75" lengthAdjust="spacingAndGlyphs">DE SAN JOSÉ DE</text>
                <text x="68" y="77" font-size="33" stroke-width="1.600" textLength="75.500" lengthAdjust="spacingAndGlyphs">CÚCUTA</text>
              </g>
            </svg>
          </div>
          <div class="lh-c lh-b r1"><p><span v-fit="285.5" class="fit">SISTEMA DE GESTIÓN DE LA CALIDAD Y</span></p><p><span v-fit="162.5" class="fit">SISTEMA DE CONTROL</span></p><p><span v-fit="64.5" class="fit">INTERNO</span></p></div>
          <div class="lh-c lh-date"><p><span v-fit="163" class="fit">Fecha: agosto de 2020</span></p><p><span v-fit="80" class="fit">Versión:&nbsp;&nbsp; 3</span></p></div>
          <div class="lh-c lh-b r2"><p><span v-fit="238.5" class="fit">FORMATO ÚNICO DE ACTA DE PAGO</span></p><p><span v-fit="102.5" class="fit">Y SUPERVISIÓN</span></p></div>
          <div class="lh-c lh-page"><p><span v-fit="98.5" class="fit">Página 1 de 3</span></p></div>
          <div class="lh-c r3"><p><span v-fit="137" class="fit">APOYO A LA GESTION</span></p><p><span v-fit="96.5" class="fit">INSTITUCIONAL</span></p></div>
          <div class="lh-c r3"><p><span v-fit="168" class="fit">GESTION ADMINISTRATIVA</span></p></div>
          <div class="lh-c r3"><p><span v-fit="227.5" class="fit">GESTION DOCUMENTAL, ARCHIVO Y</span></p><p><span v-fit="130" class="fit">CORRESPONDENCIA</span></p></div>
          <div class="lh-c lh-b r4"><p><span v-fit="87.500" class="fit">Macroproceso</span></p></div>
          <div class="lh-c lh-b r4"><p><span v-fit="50" class="fit">Proceso</span></p></div>
          <div class="lh-c lh-b r4"><p><span v-fit="73.500" class="fit">Subproceso</span></p></div>
        </div>

        <div class="headline">
          <p><span v-fit="140" class="fit">PAGO No. 6 de 8</span></p>
          <p><span v-fit="76.5" class="fit">SECOP II</span></p>
        </div>

        <div v-for="(t, ti) in tables" :key="ti" class="table" :style="{ marginTop: t.gap + 'px' }">
          <div v-for="(r, ri) in t.rows" :key="ri" class="row" :class="{ head: r.head }" :style="{ height: r.h + 'px' }">
            <div
              v-for="(c, ci) in r.cells" :key="ci" class="cell" :class="c.c"
              :style="{ width: c.w ? c.w + 'px' : 'auto', flex: c.w ? 'none' : '1', paddingTop: (c.top ?? 0) + 'px', paddingLeft: (c.pad ?? (c.c ? 0 : 9.300)) + 'px' }"
            >
              <div v-for="(ln, li) in c.lines" :key="li" class="line" :style="{ height: (c.lh ?? 20) + 'px' }">
                <span v-for="(run, ui) in ln" :key="ui" v-fit="run[1]" class="fit" :class="run[2]" :style="{ marginLeft: (run[3] ?? 0) + 'px' }">{{ run[0] }}</span>
              </div>
            </div>
          </div>
        </div>
      </article>
    </main>

    <footer class="status"><Strip :items="statusBar" /></footer>
  </div>
</template>

<style>
body { margin: 0; background: #242424; overflow: hidden; }
p { margin: 0; }
.fit { display: inline-block; flex: none; white-space: pre; transform-origin: 0 50%; }
.strip { display: flex; align-items: center; height: 100%; }
.strip > * { flex: none; }
.strip .ico { display: block; }
.strip .lab { white-space: pre; display: flex; align-items: center; }
.strip .sep { width: 1px; height: 18px; background: #474747; }
.strip .box { display: flex; }
.title .auto { font-size: 12px; font-weight: 500; color: #a5a5a5; }
.title .doc { font-size: 13px; font-weight: 700; color: #fff; }
.title .saved { font-size: 13px; font-weight: 600; color: #dcdcdc; }
.tab { position: relative; font-size: 13px; font-weight: 500; color: #8b8b8b; margin-top: -1px; }
.tab.active { font-weight: 700; color: #a0a0a0; }
.tab.active::after { content: ''; position: absolute; left: 0; right: 0; top: 18.5px; height: 3px; border-radius: 1.5px; background: #ededed; }
.btn { height: 24px; margin-top: 2px; border-radius: 3px; background: #454545; color: #979797; font-size: 13px; font-weight: 600; }
.field { height: 23px; border-radius: 3px; background: #323232; box-shadow: 0 0 0 1px #2d2d2d; color: #f4f4f4; font-size: 12.5px; font-weight: 500; }
.lab.aa { font-size: 14px; color: #959595; }
.fmt { font-size: 14px; color: #959595; }
.fmt.x { font-weight: 500; margin-top: 1px; }
.fmt.b { font-weight: 700; font-size: 13px; }
.fmt.i { font-family: 'Liberation Serif', serif; font-style: italic; font-size: 16px; }
.fmt.u .fit { border-bottom: 1px solid #959595; line-height: 14px; }
.fmt.st .fit { position: relative; }
.fmt.st .fit::after { content: ''; position: absolute; left: -2px; right: -2px; top: 56%; height: 1px; background: #959595; }
.sub, .sup { font-size: 7px; font-weight: 600; color: #1f7fc4; }
.sub { margin-top: 10px; }
.sup { margin-bottom: 10px; }
</style>

<style scoped>
.app { width: 1920px; height: 1080px; display: flex; flex-direction: column; font-family: Inter, 'Liberation Sans', sans-serif; font-size: 12px; overflow: hidden; background: #242424; }
.title { height: 38px; box-sizing: border-box; border-top: 1px solid #4a4a4a; padding-top: 1px; background: #1a1a1a; flex: none; }
.tabs { height: 30px; flex: none; background: #282828; }
.ribbon { height: 75px; flex: none; display: flex; box-sizing: border-box; padding-top: 4px; background: #282828; border-bottom: 1px solid #000; }
.clip { width: 92px; height: 62px; display: flex; flex: none; }
.paste { width: 62px; display: flex; flex-direction: column; }
.paste-top { display: flex; align-items: center; gap: 4px; padding: 3px 0 0 17px; height: 34px; box-sizing: border-box; }
.paste .big-label { margin: 5px 0 0 20px; }
.edit { display: flex; flex-direction: column; gap: 5px; padding-top: 3px; align-items: center; width: 18px; }
.edit svg { flex: none; }
.big-label { display: block; font-size: 11px; line-height: 12px; font-weight: 500; color: #a5a5a5; }
.group { height: 62px; border-left: 1px solid #4a4a4a; flex: none; display: flex; flex-direction: column; }
.group > :deep(.strip) { height: 32px; flex: none; margin-top: 1px; }
.group > :deep(.strip) + :deep(.strip) { margin-top: -1px; }
.font { width: 321px; }
.para { width: 281px; }
.styles { width: 1054px; flex-direction: row; }
.gallery { margin: 1px 0 0 10px; width: 995px; height: 58px; box-sizing: border-box; border: 1px solid #3f3f3f; border-radius: 3px; background: #353535; display: flex; align-items: center; padding-left: 17px; flex: none; }
.slot { width: 80px; height: 54px; flex: none; box-sizing: border-box; display: flex; justify-content: center; align-items: center; border-radius: 4px; }
.slot.sel { border: 1px solid #a0a0a0; background: #454545; }
.card { width: 68px; height: 44px; border-radius: 3px; background: #a3a3a3; overflow: hidden; color: #000; }
.sample { height: 30px; box-sizing: border-box; margin-right: 2px; overflow: hidden; line-height: 30px; font-size: 13px; white-space: nowrap; }
.cname { height: 14px; line-height: 14px; font-size: 9.5px; background: #979797; display: flex; justify-content: center; border-top: 0; font-weight: 500; color: #111; }
.serif { font-family: 'Liberation Serif', serif; font-size: 12.5px; }
.it { font-style: italic; }
.gry { color: #3a3a3a; }
.bold { font-weight: 700; }
.big { font-size: 14px; }
.hd { font-family: 'Liberation Sans', sans-serif; font-weight: 700; font-size: 13px; }
.h7 { font-size: 15px; color: #555; }
.h9 { color: #555; font-size: 13px; }
.sbt { font-family: 'Open Sans', sans-serif; font-size: 11.5px; letter-spacing: 1.500px; color: #404040; }
.ttl { font-family: 'Open Sans', sans-serif; font-size: 26px; }
.more { margin-left: 6px; }
.tool { display: flex; flex-direction: column; align-items: center; height: 62px; flex: none; }
.tool svg { margin: 3px 0 4px; flex: none; }
.pane { margin-left: 5px; width: 32px; }
.dictate, .editor { border-left: 1px solid #4a4a4a; width: 61px; }
.editor { width: 55px; }

.canvas { flex: 1; overflow: hidden; padding: 20px 0 0 472.500px; min-height: 0; }
.page { width: 976px; height: 1100px; background: #fff; font-family: 'Liberation Sans', Arial, sans-serif; color: #000; overflow: hidden; }
.letterhead { display: grid; grid-template-columns: 184px 333px 265px; grid-template-rows: 50px 38px 34px 15px; margin: 58px 0 0 105.500px; width: 782px; border-top: 1px solid #777; border-left: 1px solid #777; color: #777; }
.lh-logo { grid-row: 1 / 3; border-right: 1px solid #777; border-bottom: 1px solid #777; }
.lh-logo svg { display: block; }
.lh-c { border-right: 1px solid #777; border-bottom: 1px solid #777; display: flex; flex-direction: column; align-items: center; justify-content: center; }
.lh-b { font-weight: 700; }
.r1 { font-size: 14px; line-height: 16px; padding-top: 2px; }
.r2 { font-size: 16px; line-height: 19px; }
.lh-date { align-items: flex-start; padding-left: 6px; font-size: 16px; line-height: 18px; padding-top: 2px; }
.lh-page { font-size: 16px; line-height: 18px; padding-top: 2px; }
.r3 { font-size: 14px; line-height: 15px; }
.r4 { font-size: 13px; line-height: 14px; padding-top: 1px; }
.headline { margin: 42px 0 0 30px; font-weight: 700; font-size: 17.600px; line-height: 21px; height: 61px; display: flex; flex-direction: column; align-items: center; }
.table { margin-left: 111.500px; width: 780px; box-sizing: border-box; border: 1px solid #000; border-bottom: 0; }
.row { display: flex; box-sizing: border-box; border-bottom: 1px solid #000; }
.row.head { background: #e1e1e1; font-weight: 700; }
.cell { box-sizing: border-box; font-size: 17.600px; line-height: 20px; min-width: 0; -webkit-text-stroke: .150px; }
.cell + .cell { border-left: 1px solid #000; }
.line { display: flex; align-items: baseline; }
.mid .line { justify-content: center; }
.sm { font-size: 16.500px; line-height: 19px; }
.small { font-size: 16px; }
.bold { font-weight: 700; }
.link { color: #0f5bbd; box-shadow: 0 -1px 0 #0f5bbd inset; }
.dotted { background: repeating-linear-gradient(90deg, #6a50d8 0 4px, transparent 4px 6px) 0 100% / 100% 1.500px no-repeat; }
.dbl { border-bottom: 3px double #2b5cc4; line-height: 18px; }
.wavy { text-decoration: underline wavy #e03040 1px; text-underline-offset: 2px; text-decoration-skip-ink: none; }

.status { height: 22px; flex: none; box-sizing: content-box; border-top: 1px solid #000; background: linear-gradient(#404040, #343434); color: #dadada; font-size: 12px; }
</style>
